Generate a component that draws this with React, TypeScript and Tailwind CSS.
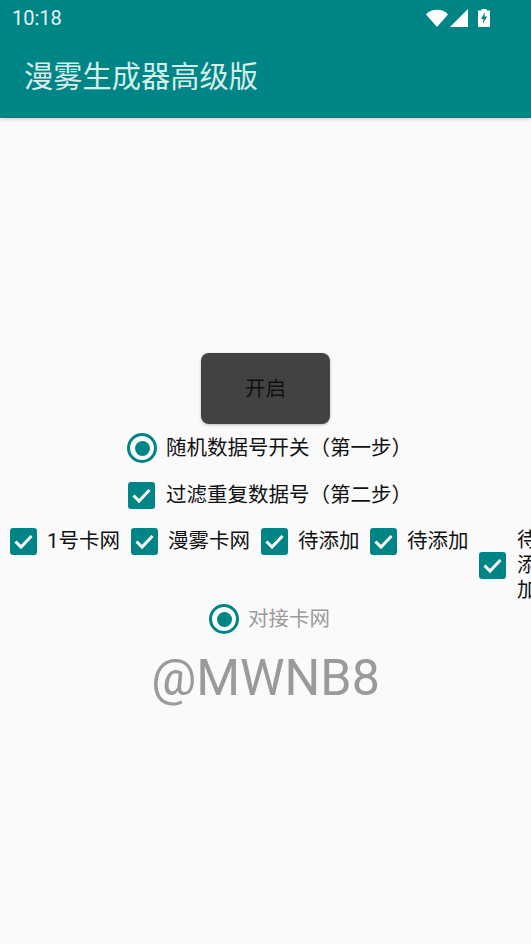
const cjk = { fontFamily: '"Roboto", "Noto Sans CJK SC", sans-serif' };

function CheckBox() {
  return (
    <span className="flex h-[27px] w-[27px] shrink-0 items-center justify-center rounded-[3px] bg-[#008587]">
      <svg viewBox="0 0 27 27" className="h-[27px] w-[27px]" fill="none">
        <path d="M5.500 13.500l5.500 5.500L21.500 8" stroke="#fafafa" strokeWidth="3" />
      </svg>
    </span>
  );
}

function Radio() {
  return (
    <span className="flex h-[30px] w-[30px] shrink-0 items-center justify-center rounded-full border-[3px] border-[#008587]">
      <span className="h-[15px] w-[15px] rounded-full bg-[#008587]" />
    </span>
  );
}

function Item({ label, width }: { label: string; width: string }) {
  return (
    <div className={`flex h-[27px] shrink-0 items-center gap-[10px] ${width}`}>
      <CheckBox />
      <span className="whitespace-nowrap text-[20.5px] leading-[27px] text-[#111]">{label}</span>
    </div>
  );
}

export default function App() {
  return (
    <div className="flex h-[944px] w-[531px] flex-col overflow-hidden bg-[#fafafa]" style={cjk}>
      <header className="h-[118px] shrink-0 bg-[#008587] shadow-[0_1px_4px_rgba(0,0,0,0.2)]">
        <div className="flex h-[36px] items-center justify-between pl-[12px] pr-[41px]">
          <span className="text-[20px] leading-none text-[#e6f3f1]">10:18</span>
          <div className="flex items-center">
            <svg viewBox="0 0 22 18" className="h-[18px] w-[22px]">
              <path d="M0 5.500C3 2.200 6.800.8 11 .8s8 1.400 11 4.700L11 18z" fill="#fff" />
            </svg>
            <svg viewBox="0 0 18 18" className="ml-[2px] h-[18px] w-[18px]">
              <path d="M18 0v18H0z" fill="#fff" />
            </svg>
            <svg viewBox="0 0 12 18" className="ml-[10px] h-[18px] w-[12px]">
              <path d="M3.500 0h5v1.500H12V18H0V1.500h3.500z" fill="#fff" />
              <path d="M7 3L3 10h2.500L5 15l4-7.500H6.500z" fill="#008587" />
            </svg>
          </div>
        </div>
        <h1 className="pl-[24px] pt-[20px] text-[29.250px] font-normal leading-[42px] text-[#d5eeea]">
          漫雾生成器高级版
        </h1>
      </header>

      <main className="flex flex-col items-center pt-[235px]">
        <button className="h-[71px] w-[129px] rounded-[8px] bg-[#424242] pt-[2px] text-[20.500px] text-[#111] shadow-[0_1px_3px_rgba(0,0,0,0.25)]">
          开启
        </button>

        <div className="mt-[9px] flex h-[30px] items-center gap-[9px] self-start pl-[127px]">
          <Radio />
          <span className="whitespace-nowrap text-[20.500px] text-[#111]">随机数据号开关（第一步）</span>
        </div>

        <div className="mt-[17px] flex h-[30px] items-center gap-[11px] self-start pl-[128px]">
          <CheckBox />
          <span className="whitespace-nowrap text-[20.500px] text-[#111]">过滤重复数据号（第二步）</span>
        </div>

        <div className="mt-[18px] flex items-start self-start pl-[10px]">
          <Item label="1号卡网" width="w-[121px]" />
          <Item label="漫雾卡网" width="w-[130px]" />
          <Item label="待添加" width="w-[109px]" />
          <Item label="待添加" width="w-[109px]" />
          <div className="flex shrink-0 items-center gap-[11px]">
            <CheckBox />
            <span className="w-[21px] text-[20.500px] leading-[25px] text-[#111]">待添加</span>
          </div>
        </div>

        <div className="mt-[1px] flex h-[30px] items-center gap-[9px] self-start pl-[209px]">
          <Radio />
          <span className="whitespace-nowrap text-[20.500px] text-[#9a9a9a]">对接卡网</span>
        </div>

        <p className="mt-[12px] text-[50.200px] leading-[64px] text-[#9a9a9a]">@MWNB8</p>
      </main>
    </div>
  );
}
